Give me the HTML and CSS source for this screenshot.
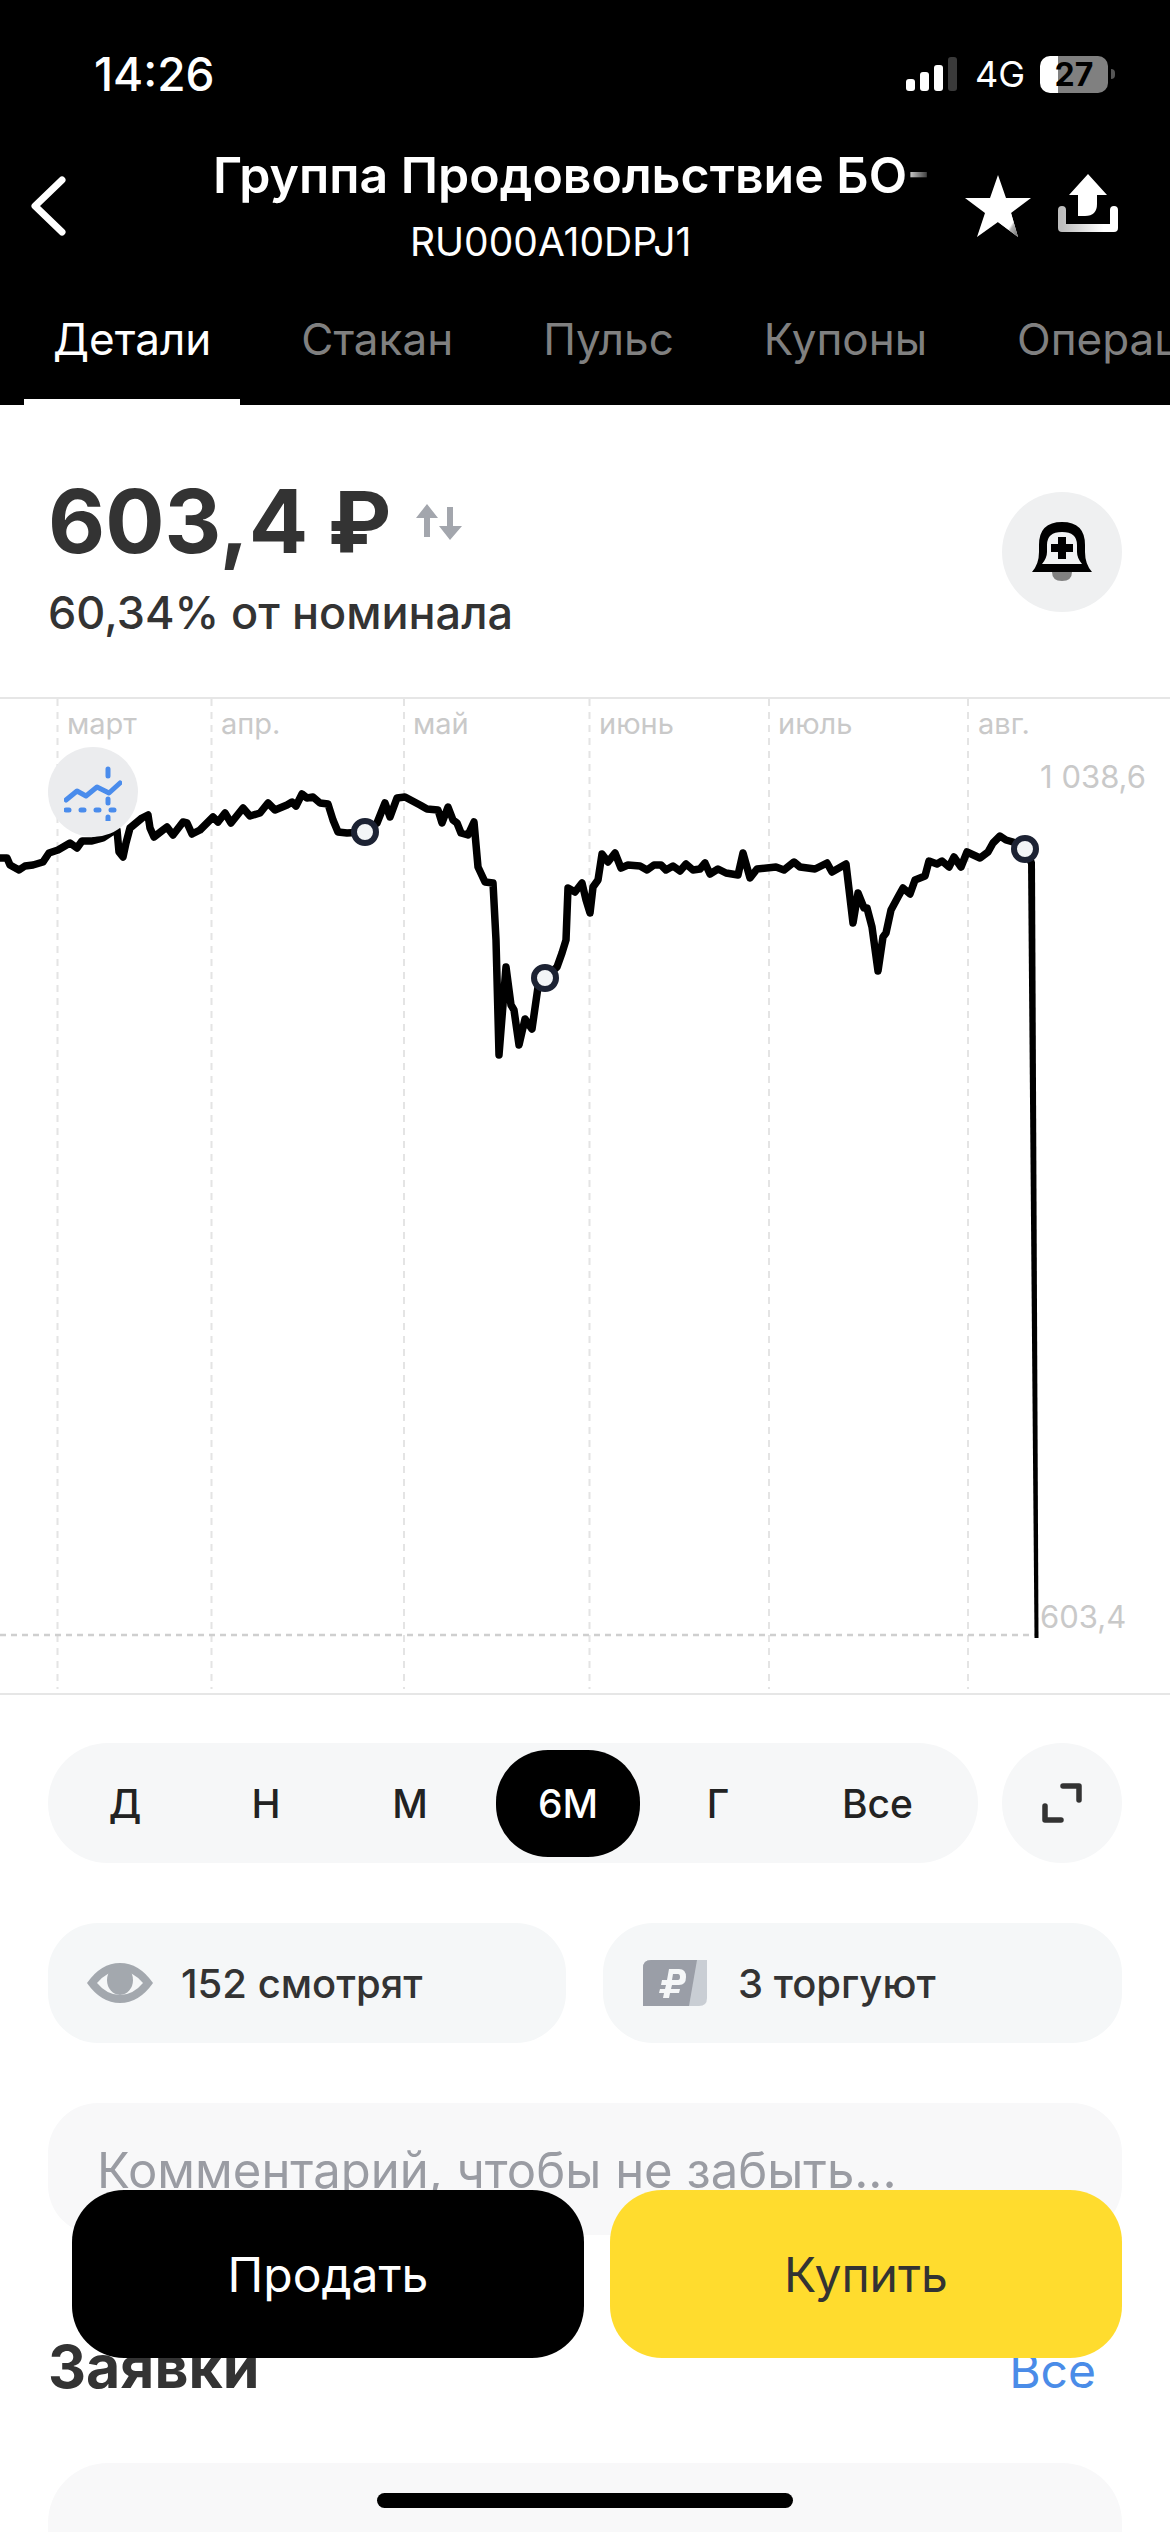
FILE: index.html
```html
<!DOCTYPE html>
<html lang="ru">
<head>
    <meta charset="UTF-8">
    <meta name="viewport" content="width=device-width, initial-scale=1.0">
    <title>Группа Продовольствие БО-</title>
    <link rel="stylesheet" href="styles.css">
</head>
<body>
    <div class="screen">
        <header class="top">
            <div class="status">
                <span class="time">14:26</span>
                <div class="status-right">
                    <svg class="signal" width="52" height="34" viewBox="0 0 52 34">
                        <rect x="0" y="22" width="9" height="12" rx="3" fill="#fff"/>
                        <rect x="14" y="15" width="9" height="19" rx="3" fill="#fff"/>
                        <rect x="28" y="8" width="9" height="26" rx="3" fill="#fff"/>
                        <rect x="42" y="0" width="9" height="34" rx="3" fill="#3a3a3a"/>
                    </svg>
                    <span class="net">4G</span>
                    <div class="battery"><span class="battery-level">27</span></div>
                    <span class="battery-nub"></span>
                </div>
            </div>
            <nav class="nav">
                <svg class="back" width="36" height="60" viewBox="0 0 36 60">
                    <path d="M32 4 L5 30 L32 56" fill="none" stroke="#fff" stroke-width="7" stroke-linecap="round" stroke-linejoin="round"/>
                </svg>
                <div class="nav-title">
                    <div class="name">Группа Продовольствие БО-</div>
                    <div class="isin">RU000A10DPJ1</div>
                </div>
                <svg class="star" width="66" height="62" viewBox="0 0 66 62">
                    <defs>
                        <linearGradient id="starShade" x1="0.4" y1="0.5" x2="0.9" y2="1">
                            <stop offset="0.35" stop-color="#fff"/>
                            <stop offset="0.5" stop-color="#b5b5b5"/>
                            <stop offset="1" stop-color="#777"/>
                        </linearGradient>
                    </defs>
                    <path d="M33 0 L41 23 L66 23 L46 38 L53 62 L33 47 L12 62 L20 38 L0 23 L25 23 Z" fill="#fff"/>
                    <path d="M33 47 L53 62 L46 38 L42 31 Z" fill="url(#starShade)"/>
                </svg>
                <svg class="share" width="60" height="60" viewBox="0 0 60 60">
                    <defs>
                        <linearGradient id="trayShade" x1="0" y1="0" x2="1" y2="0">
                            <stop offset="0" stop-color="#bdbdbd"/>
                            <stop offset="0.8" stop-color="#fff"/>
                        </linearGradient>
                    </defs>
                    <path d="M30 0 L49 21 L39 21 L39 30 Q39 42 27 42 L20 42 L20 21 L11 21 Z" fill="#fff"/>
                    <path d="M4 36 L4 54 L56 54 L56 36" fill="none" stroke="url(#trayShade)" stroke-width="8" stroke-linejoin="round" stroke-linecap="round"/>
                </svg>
            </nav>
            <div class="tabs">
                <div class="tab tab-active">Детали</div>
                <div class="tab">Стакан</div>
                <div class="tab">Пульс</div>
                <div class="tab">Купоны</div>
                <div class="tab">Операции</div>
            </div>
        </header>

        <section class="price-block">
            <div>
                <div class="price-line">
                    <span class="price">603,4 <span class="rub">₽</span></span>
                    <svg class="swap" width="50" height="36" viewBox="0 0 50 36">
                        <path d="M12 0 L23 14 L15 14 L15 33 L9 33 L9 14 L1 14 Z" fill="#a3a6ad"/>
                        <path d="M35 36 L24 22 L32 22 L32 3 L38 3 L38 22 L47 22 Z" fill="#a3a6ad"/>
                    </svg>
                </div>
                <div class="nominal">60,34% от номинала</div>
            </div>
            <div class="round-btn round-btn-alert">
                <svg width="60" height="60" viewBox="0 0 60 60">
                    <path d="M20 50 H40 Q40 59 30 59 Q20 59 20 50 Z" fill="#808080"/>
                    <path d="M0 50 Q7 42 7 30 V23 Q7 0 30 0 Q53 0 53 23 V30 Q53 42 60 50 Z" fill="#000"/>
                    <path d="M10 42 Q15 36 15 30 V23 Q15 10 30 10 Q45 10 45 23 V30 Q45 36 50 42 Z" fill="#f1f2f3"/>
                    <path d="M26 15 H34 V22 H41 V30 H34 V37 H26 V30 H19 V22 H26 Z" fill="#000"/>
                </svg>
            </div>
        </section>

        <section class="chart">
            <svg class="chart-svg" width="1170" height="995" viewBox="0 699 1170 995">
                <g class="grid-v">
                    <line x1="57.5" y1="699" x2="57.5" y2="1689"/>
                    <line x1="211.5" y1="699" x2="211.5" y2="1689"/>
                    <line x1="404" y1="699" x2="404" y2="1689"/>
                    <line x1="589.5" y1="699" x2="589.5" y2="1689"/>
                    <line x1="769" y1="699" x2="769" y2="1689"/>
                    <line x1="968" y1="699" x2="968" y2="1689"/>
                </g>
                <line class="grid-h" x1="0" y1="1635" x2="1036" y2="1635"/>
                <path class="price-path" d="M0 858 L7 858 L10 865 L19 870 L25 866 L33 865 L43 862 L49 853 L58 850 L70 843 L77 848 L82 841 L92 841 L103 838 L115 830 L117 830 L119 852 L123 857 L126 843 L130 828 L142 818 L148 815 L150 828 L154 837 L163 830 L167 827 L173 835 L183 822 L187 823 L192 834 L200 830 L213 817 L218 822 L225 813 L231 823 L243 808 L250 816 L260 813 L268 803 L275 810 L287 805 L292 802 L296 806 L302 794 L307 798 L313 797 L320 803 L328 804 L333 820 L338 832 L347 833 L365 832 L377 823 L385 803 L390 817 L397 798 L405 797 L420 805 L427 809 L438 810 L442 823 L448 807 L453 820 L457 823 L461 833 L468 835 L474 822 L478 867 L485 882 L493 883 L496 940 L499 1055 L506 967 L511 1005 L514 1010 L519 1045 L525 1019 L532 1029 L538 987 L545 978 L557 967 L562 953 L566 940 L568 888 L575 892 L582 883 L586 900 L590 913 L593 887 L598 880 L602 854 L608 862 L615 853 L621 868 L628 865 L640 866 L647 870 L654 865 L661 865 L666 870 L673 866 L680 871 L686 864 L693 870 L700 869 L705 863 L710 874 L718 869 L726 873 L738 875 L743 853 L750 878 L757 869 L776 867 L784 870 L794 862 L800 867 L815 869 L827 863 L832 872 L846 864 L853 923 L858 893 L864 908 L867 908 L872 927 L878 971 L883 937 L886 933 L891 910 L898 897 L903 888 L910 894 L915 880 L925 876 L929 861 L937 864 L942 861 L949 867 L954 857 L961 867 L967 852 L980 858 L988 852 L993 843 L1000 836 L1006 840 L1013 842 L1025 849 L1031 862"/>
                <path class="drop-path" d="M1028 862 L1035 862 L1038.5 1638 L1034.5 1638 Z"/>
                <circle class="marker" cx="365" cy="832" r="11"/>
                <circle class="marker" cx="545" cy="978" r="11"/>
                <circle class="marker" cx="1025" cy="849" r="11"/>
            </svg>
            <div class="months">
                <span class="month month-mar">март</span>
                <span class="month month-apr">апр.</span>
                <span class="month month-may">май</span>
                <span class="month month-jun">июнь</span>
                <span class="month month-jul">июль</span>
                <span class="month month-aug">авг.</span>
            </div>
            <span class="axis-val axis-max">1 038,6</span>
            <span class="axis-val axis-min">603,4</span>
            <div class="indicators">
                <svg width="58" height="58" viewBox="0 0 58 58">
                    <path d="M2 37 L13 28 L22 33 L33 24 L45 30 L56 20" fill="none" stroke="#4a8cec" stroke-width="5" stroke-linecap="round" stroke-linejoin="round"/>
                    <path d="M2 47 H56" fill="none" stroke="#4a8cec" stroke-width="5" stroke-linecap="round" stroke-dasharray="3 12"/>
                    <path d="M44 6 V13 M44 36 V40 M44 54 V58" fill="none" stroke="#4a8cec" stroke-width="5" stroke-linecap="round"/>
                </svg>
            </div>
        </section>

        <section class="controls">
            <div class="periods">
                <span class="period period-d">Д</span>
                <span class="period period-w">Н</span>
                <span class="period period-m">М</span>
                <span class="period period-active">6М</span>
                <span class="period period-y">Г</span>
                <span class="period period-all">Все</span>
            </div>
            <div class="round-btn round-btn-light">
                <svg width="42" height="42" viewBox="0 0 42 42">
                    <path d="M22 4 H38 V18 M4 24 V38 H20" fill="none" stroke="#333" stroke-width="5.5" stroke-linecap="round" stroke-linejoin="round"/>
                </svg>
            </div>
        </section>

        <section class="stats">
            <div class="stat stat-watch">
                <svg width="66" height="40" viewBox="0 0 66 40">
                    <path d="M0 20 Q14 0 33 0 Q52 0 66 20 Q52 40 33 40 Q14 40 0 20 Z" fill="#a3a8ae"/>
                    <path d="M10 20 Q20 8 33 8 Q46 8 56 20 Q46 32 33 32 Q20 32 10 20 Z" fill="#f5f7f8"/>
                    <ellipse cx="33" cy="17" rx="13" ry="15" fill="#a3a8ae"/>
                </svg>
                <span>152 смотрят</span>
            </div>
            <div class="stat stat-trade">
                <svg width="64" height="46" viewBox="0 0 64 46">
                    <path d="M8 0 H64 V38 Q64 46 56 46 H0 V8 Q0 0 8 0 Z" fill="#c9ced4"/>
                    <path d="M8 0 H54 L46 46 H0 V8 Q0 0 8 0 Z" fill="#9a9ea7"/>
                    <path d="M26 9 H36 Q43 9 43 17 Q43 25 36 25 H29 L28 29 H37 L36 33 H27 L26 38 H20 L21 33 H16 L17 29 H22 L23 25 H18 L19 20 H24 Z M30 14 L29 20 H35 Q37 20 37 17 Q37 14 35 14 Z" fill="#f5f7f8" fill-rule="evenodd"/>
                </svg>
                <span>3 торгуют</span>
            </div>
        </section>

        <div class="comment">Комментарий, чтобы не забыть...</div>

        <section class="orders-head">
            <h2>Заявки</h2>
            <span class="orders-all">Все</span>
        </section>

        <div class="orders-card"></div>

        <div class="actions">
            <div class="action action-sell">Продать</div>
            <div class="action action-buy">Купить</div>
        </div>
        <div class="home-bar"></div>
    </div>
</body>
</html>
```

FILE: styles.css
```css
* {
    box-sizing: border-box;
}

body {
    margin: 0;
    background-color: #fff;
    font-family: Inter, "Noto Sans", sans-serif;
    color: #333;
}

.screen {
    position: relative;
    width: 1170px;
    height: 2532px;
    overflow: hidden;
}

.top {
    height: 405px;
    background-color: #000;
    color: #fff;
}

.status {
    display: flex;
    justify-content: space-between;
    align-items: center;
    height: 148px;
    padding: 0 55px 0 94px;
}

.time {
    font-size: 46px;
    font-weight: 500;
}

.status-right {
    display: flex;
    align-items: center;
}

.signal {
    margin-right: 17px;
}

.net {
    font-size: 36px;
    margin-right: 15px;
}

.battery {
    width: 68px;
    height: 37px;
    border-radius: 10px;
    background: linear-gradient(90deg, #fff 18px, #808080 18px);
    color: #000;
    text-align: center;
    line-height: 37px;
}

.battery-level {
    font-size: 32px;
    font-weight: 700;
}

.battery-nub {
    width: 4px;
    height: 10px;
    margin-left: 3px;
    border-radius: 0 4px 4px 0;
    background-color: #555;
}

.nav {
    display: flex;
    align-items: flex-start;
    height: 112px;
}

.back {
    margin: 28px 0 0 30px;
}

.nav-title {
    width: 722px;
    margin: -3px 0 0 147px;
    overflow: hidden;
}

.name {
    white-space: nowrap;
    font-size: 50px;
    font-weight: 600;
    line-height: 60px;
    -webkit-mask-image: linear-gradient(90deg, #000 690px, transparent 722px);
    mask-image: linear-gradient(90deg, #000 690px, transparent 722px);
}

.isin {
    width: 722px;
    margin-top: 14px;
    padding-left: 197px;
    font-size: 39px;
    line-height: 46px;
}

.star {
    margin: 27px 0 0 30px;
}

.share {
    margin: 26px 0 0 27px;
}

.tabs {
    display: flex;
    height: 145px;
    padding: 0 0 0 24px;
    white-space: nowrap;
    overflow: hidden;
}

.tab {
    flex: none;
    height: 145px;
    margin-right: 32px;
    padding: 51px 29px 0;
    color: #808080;
    font-size: 44px;
    line-height: 56px;
}

.tab-active {
    color: #fff;
    border-bottom: 6px solid #fff;
}

.price-block {
    display: flex;
    justify-content: space-between;
    align-items: flex-start;
    height: 294px;
    padding: 60px 48px 0;
    border-bottom: 2px solid #e6e6e6;
}

.price-line {
    display: flex;
    align-items: center;
}

.price {
    font-size: 88px;
    font-weight: 700;
    line-height: 112px;
}

.rub {
    font-family: Roboto, sans-serif;
}

.swap {
    margin: 0 0 0 24px;
}

.nominal {
    margin-top: 4px;
    font-size: 45px;
    font-weight: 500;
    line-height: 60px;
}

.round-btn {
    display: flex;
    justify-content: center;
    align-items: center;
    flex: none;
    width: 120px;
    height: 120px;
    border-radius: 50%;
}

.round-btn-alert {
    margin-top: 27px;
    background-color: #eff0f1;
}

.round-btn-light {
    background-color: #f6f7f8;
}

.chart {
    position: relative;
    height: 996px;
    border-bottom: 2px solid #e6e6e6;
}

.chart-svg {
    display: block;
}

.grid-v line {
    stroke: #e4e4e4;
    stroke-width: 2;
    stroke-dasharray: 7 6;
}

.grid-h {
    stroke: #cfcfcf;
    stroke-width: 2.5;
    stroke-dasharray: 6 5;
}

.price-path {
    fill: none;
    stroke: #000;
    stroke-width: 7.5;
    stroke-linejoin: round;
    stroke-linecap: round;
}

.drop-path {
    fill: #000;
}

.marker {
    fill: #f3f5f7;
    stroke: #1c2233;
    stroke-width: 6;
}

.month {
    position: absolute;
    top: 7px;
    color: #c9c9c9;
    font-size: 29px;
    line-height: 36px;
}

.month-mar { left: 67px; }
.month-apr { left: 221px; }
.month-may { left: 413px; }
.month-jun { left: 599px; }
.month-jul { left: 778px; }
.month-aug { left: 978px; }

.axis-val {
    position: absolute;
    color: #c9c9c9;
    font-size: 31px;
    line-height: 36px;
}

.axis-max {
    top: 60px;
    right: 24px;
}

.axis-min {
    top: 900px;
    left: 1040px;
}

.indicators {
    position: absolute;
    left: 48px;
    top: 48px;
    display: flex;
    justify-content: center;
    align-items: center;
    width: 90px;
    height: 90px;
    border-radius: 50%;
    background-color: #ebecee;
}

.controls {
    display: flex;
    justify-content: space-between;
    padding: 48px 48px 0;
}

.periods {
    display: flex;
    align-items: center;
    width: 930px;
    height: 120px;
    padding-left: 6px;
    border-radius: 60px;
    background-color: #f6f7f8;
}

.period {
    color: #222;
    font-size: 39px;
    font-weight: 500;
    text-align: center;
}

.period-d { width: 142px; }
.period-w { width: 140px; }
.period-m { width: 148px; margin-right: 12px; }
.period-y { width: 156px; }
.period-all { width: 163px; }

.period-active {
    width: 144px;
    height: 107px;
    border-radius: 52px;
    background-color: #000;
    color: #fff;
    line-height: 107px;
}

.stats {
    display: flex;
    gap: 37px;
    padding: 60px 48px 0;
}

.stat {
    display: flex;
    align-items: center;
    height: 120px;
    border-radius: 50px;
    background-color: #f5f7f8;
    font-size: 40px;
    font-weight: 500;
}

.stat-watch {
    width: 518px;
    padding-left: 39px;
    gap: 28px;
}

.stat-trade {
    width: 519px;
    padding-left: 40px;
    gap: 31px;
}

.comment {
    height: 132px;
    margin: 60px 48px 0;
    padding: 38px 0 0 49px;
    border-radius: 50px;
    background-color: #f8f8f9;
    color: #9a9ca3;
    font-size: 49px;
    line-height: 60px;
    white-space: nowrap;
}

.orders-head {
    display: flex;
    justify-content: space-between;
    align-items: baseline;
    padding: 97px 74px 0 48px;
}

.orders-head h2 {
    margin: 0;
    font-size: 59px;
    font-weight: 700;
    line-height: 70px;
}

.orders-all {
    color: #4a8ce8;
    font-size: 48px;
}

.orders-card {
    height: 200px;
    margin: 61px 48px 0;
    border-radius: 60px;
    background-color: #f8f8f9;
}

.actions {
    position: absolute;
    left: 72px;
    right: 48px;
    top: 2190px;
    display: flex;
    gap: 26px;
}

.action {
    display: flex;
    justify-content: center;
    align-items: center;
    height: 168px;
    border-radius: 52px;
    font-size: 48px;
}

.action-sell {
    width: 512px;
    background-color: #000;
    color: #fff;
}

.action-buy {
    width: 512px;
    background-color: #ffdc2e;
    color: #333;
}

.home-bar {
    position: absolute;
    left: 377px;
    top: 2493px;
    width: 416px;
    height: 15px;
    border-radius: 8px;
    background-color: #000;
}
```
